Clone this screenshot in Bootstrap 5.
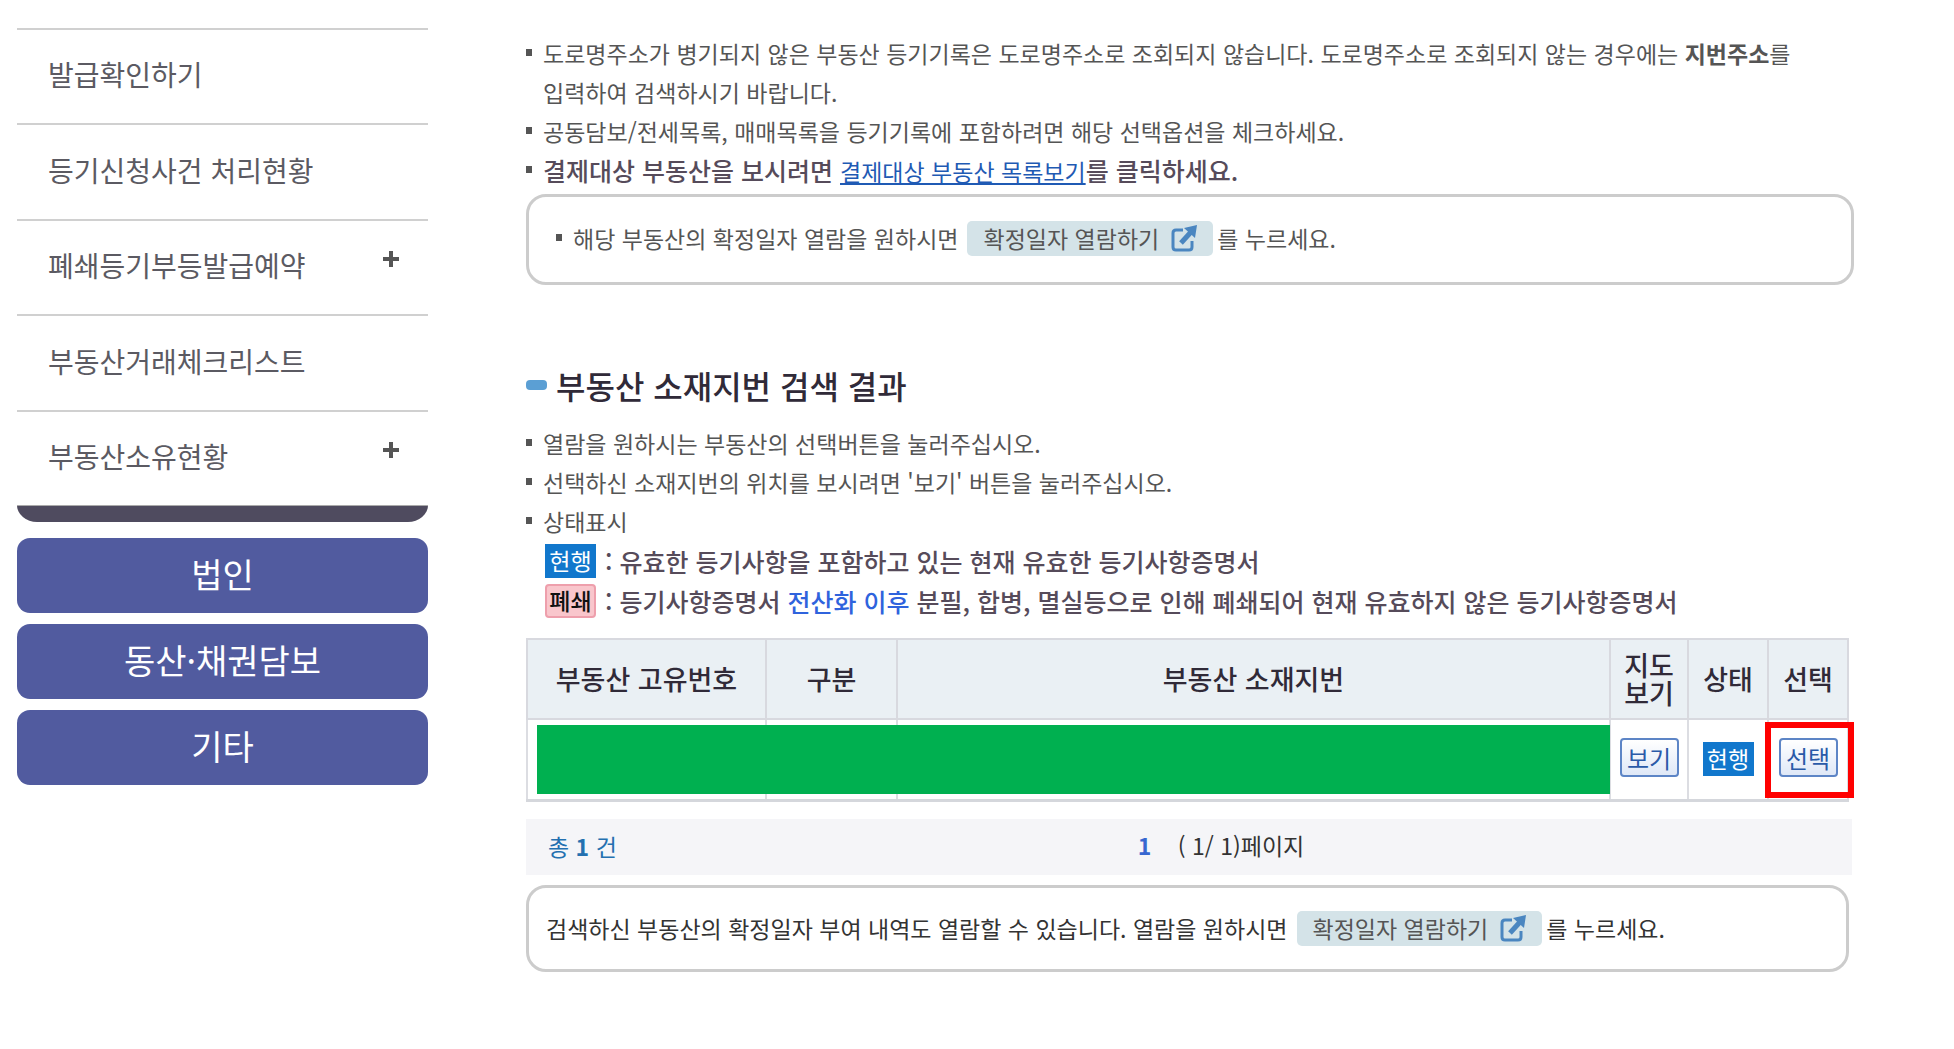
<!DOCTYPE html>
<html lang="ko">
<head>
<meta charset="utf-8">
<meta name="viewport" content="width=device-width, initial-scale=1">
<title>부동산 소재지번 검색 결과</title>
<link href="https://cdn.jsdelivr.net/npm/bootstrap@5.3.0/dist/css/bootstrap.min.css" rel="stylesheet">
<style>
  body { font-family: "Noto Sans CJK KR", sans-serif; font-size: 23px; line-height: 39px; color: #555; background: #fff; }
  .page { padding: 28px 100px 40px 17px; }
  .side { flex: 0 0 411px; margin-right: 98px; }
  .side-menu { margin: 0; }
  .side-menu a { height: 95px; border-top: 2px solid #d0d0d0; padding: 0 29px 4px 31px; font-size: 28px; color: #5b5a62; text-decoration: none; }
  .side-menu li:nth-child(even) a { height: 96px; }
  .side-foot { height: 17px; margin-bottom: 16px; border-top: 1px solid #aaa; border-radius: 0 0 20px 20px / 0 0 17px 17px; background: #4f4b5f; }
  .plus-mark { margin-bottom: 14px; }
  .btn-group-main { --bs-btn-color: #fff; --bs-btn-bg: #515b9f; --bs-btn-hover-color: #fff; --bs-btn-hover-bg: #454e8c; height: 75px; padding: 0 0 4px; border: 0; border-radius: 13px; font-size: 34px; line-height: 48px; }
  .group-stack { gap: 11px; }
  main { min-width: 0; padding-top: 6px; }
  .dots { list-style: none; margin: 0; padding: 0; }
  .dots > li { position: relative; padding-left: 17px; }
  .dots > li::before { content: ""; position: absolute; left: 0; top: 15px; width: 6px; height: 7px; background: #555; }
  .strong-text { font-size: 25px; font-weight: 500; color: #564b5a; }
  .list-link { font-size: 23px; font-weight: 400; color: #1f5ab4; }
  .rounded-box { border: 3px solid #ccc; border-radius: 20px; }
  .box-top { height: 91px; padding: 0 27px 2px; margin-top: 3px; }
  .box-bottom { height: 87px; padding: 0 17px; margin: 10px 5px 0 0; color: #333; }
  .btn-open { --bs-btn-color: #555; --bs-btn-bg: #d4e3e8; --bs-btn-hover-bg: #c3d8df; height: 35px; padding: 0 16px; border: 0; border-radius: 5px; font-size: 23px; line-height: 35px; gap: 12px; margin: 0 4px 0 9px; }
  .result-title { margin: 77px 0 16px; font-size: 32px; line-height: 46px; font-weight: 500; color: #302a38; gap: 9px; }
  .title-pill { width: 21px; height: 10px; border-radius: 4px; background: #5b9fd4; }
  .legend-row { height: 40px; padding-left: 2px; gap: 9px; }
  .state { width: 51px; height: 34px; font-size: 23px; line-height: 32px; text-align: center; flex: none; }
  .state-live { background: #1177cc; color: #fff; }
  .state-closed { background: #f9c6cc; border: 2px solid #ee9fac; border-radius: 4px; color: #111; line-height: 28px; font-weight: 500; }
  .text-accent { color: #2f63dd; }
  .result-wrap { position: relative; margin: 17px 5px 0 0; }
  .result-table { table-layout: fixed; margin: 0; border: 2px solid #d5d7dc; border-bottom-width: 3px; }
  .result-table th { height: 80px; padding: 0; font-size: 27px; line-height: 28px; font-weight: 500; color: #302a38; background: #eaf0f4; border: 2px solid #d8d9df; text-align: center; vertical-align: middle; }
  .result-table td { height: 81px; padding: 0 0 6px; border: 2px solid #dcdde2; text-align: center; vertical-align: middle; }
  .col-no { width: 239px; } .col-kind { width: 131px; } .col-map { width: 78px; } .col-state { width: 80px; }
  .btn-cell { --bs-btn-color: #2a5aa8; --bs-btn-border-color: #5d85c6; --bs-btn-hover-color: #2a5aa8; --bs-btn-hover-border-color: #5d85c6; width: 59px; height: 39px; padding: 0; border-width: 2px; border-radius: 4px; font-size: 24px; line-height: 34px; background: linear-gradient(#fff, #dfe8f7); }
  .hidden-data { position: absolute; left: 11px; right: 239px; bottom: 8px; height: 69px; background: #00b050; }
  .pick-frame { position: absolute; right: -5px; bottom: 4px; width: 89px; height: 76px; border: 6px solid #f00; pointer-events: none; }
  .pager { display: grid; grid-template-columns: 46% 1fr; align-items: center; height: 56px; margin: 17px 2px 0 0; padding: 0 22px; background: #f5f5f8; }
  .pager-total { color: #2470b0; }
  .pager-page { color: #333; padding-bottom: 2px; }
  .pager-page b { color: #3767d0; margin-right: 20px; }
</style>
<script src="https://cdn.jsdelivr.net/npm/bootstrap@5.3.0/dist/js/bootstrap.bundle.min.js"></script>
</head>
<body>
<svg class="d-none" aria-hidden="true">
  <symbol id="open-icon" viewBox="0 0 26 27">
    <path d="M12 5H5Q2 5 2 8V22Q2 25 5 25H18Q21 25 21 22V16" fill="none" stroke="#4a86c0" stroke-width="3"/>
    <path d="M10 18L20 7" stroke="#4a86c0" stroke-width="5" fill="none"/>
    <path d="M13 3L26 0L24 13Z" fill="#4a86c0"/>
  </symbol>
  <symbol id="plus-icon" viewBox="0 0 16 16"><path d="M8 0V16M0 8H16" stroke="#555" stroke-width="4"/></symbol>
</svg>
<div class="page d-flex align-items-start">
  <aside class="side">
    <ul class="side-menu list-unstyled">
      <li><a class="d-flex align-items-center justify-content-between" href="#">발급확인하기</a></li>
      <li><a class="d-flex align-items-center justify-content-between" href="#">등기신청사건 처리현황</a></li>
      <li><a class="d-flex align-items-center justify-content-between" href="#">폐쇄등기부등발급예약<svg class="plus-mark" width="16" height="16"><use href="#plus-icon"/></svg></a></li>
      <li><a class="d-flex align-items-center justify-content-between" href="#">부동산거래체크리스트</a></li>
      <li><a class="d-flex align-items-center justify-content-between" href="#">부동산소유현황<svg class="plus-mark" width="16" height="16"><use href="#plus-icon"/></svg></a></li>
    </ul>
    <div class="side-foot"></div>
    <div class="group-stack d-grid">
      <button type="button" class="btn btn-group-main">법인</button>
      <button type="button" class="btn btn-group-main">동산·채권담보</button>
      <button type="button" class="btn btn-group-main">기타</button>
    </div>
  </aside>
  <main class="flex-grow-1">
    <ul class="dots">
      <li>도로명주소가 병기되지 않은 부동산 등기기록은 도로명주소로 조회되지 않습니다. 도로명주소로 조회되지 않는 경우에는 <b>지번주소</b>를<br>입력하여 검색하시기 바랍니다.</li>
      <li>공동담보/전세목록, 매매목록을 등기기록에 포함하려면 해당 선택옵션을 체크하세요.</li>
      <li class="strong-text">결제대상 부동산을 보시려면 <a class="list-link" href="#">결제대상 부동산 목록보기</a>를 클릭하세요.</li>
    </ul>
    <div class="rounded-box box-top d-flex align-items-center">
      <ul class="dots"><li class="d-flex align-items-center">해당 부동산의 확정일자 열람을 원하시면
        <button type="button" class="btn btn-open d-flex align-items-center">확정일자 열람하기<svg width="26" height="27"><use href="#open-icon"/></svg></button>를 누르세요.</li></ul>
    </div>
    <h2 class="result-title d-flex align-items-center"><span class="title-pill"></span>부동산 소재지번 검색 결과</h2>
    <ul class="dots">
      <li>열람을 원하시는 부동산의 선택버튼을 눌러주십시오.</li>
      <li>선택하신 소재지번의 위치를 보시려면 '보기' 버튼을 눌러주십시오.</li>
      <li>상태표시
        <div class="legend-row strong-text d-flex align-items-center"><span class="state state-live fw-normal">현행</span><span>: 유효한 등기사항을 포함하고 있는 현재 유효한 등기사항증명서</span></div>
        <div class="legend-row strong-text d-flex align-items-center"><span class="state state-closed">폐쇄</span><span>: 등기사항증명서 <span class="text-accent">전산화 이후</span> 분필, 합병, 멸실등으로 인해 폐쇄되어 현재 유효하지 않은 등기사항증명서</span></div>
      </li>
    </ul>
    <div class="result-wrap">
      <table class="table result-table">
        <colgroup><col class="col-no"><col class="col-kind"><col><col class="col-map"><col class="col-state"><col class="col-state"></colgroup>
        <thead><tr><th scope="col">부동산 고유번호</th><th scope="col">구분</th><th scope="col">부동산 소재지번</th><th scope="col">지도<br>보기</th><th scope="col">상태</th><th scope="col">선택</th></tr></thead>
        <tbody><tr><td></td><td></td><td></td>
          <td><button type="button" class="btn btn-cell">보기</button></td>
          <td><span class="state state-live d-inline-block align-middle">현행</span></td>
          <td><button type="button" class="btn btn-cell">선택</button></td></tr></tbody>
      </table>
      <div class="hidden-data"></div>
      <div class="pick-frame"></div>
    </div>
    <div class="pager">
      <span class="pager-total">총 <b>1</b> 건</span>
      <span class="pager-page"><b>1</b> ( 1/ 1)페이지</span>
    </div>
    <div class="rounded-box box-bottom d-flex align-items-center">검색하신 부동산의 확정일자 부여 내역도 열람할 수 있습니다. 열람을 원하시면
      <button type="button" class="btn btn-open d-flex align-items-center">확정일자 열람하기<svg width="26" height="27"><use href="#open-icon"/></svg></button>를 누르세요.</div>
  </main>
</div>
</body>
</html>
